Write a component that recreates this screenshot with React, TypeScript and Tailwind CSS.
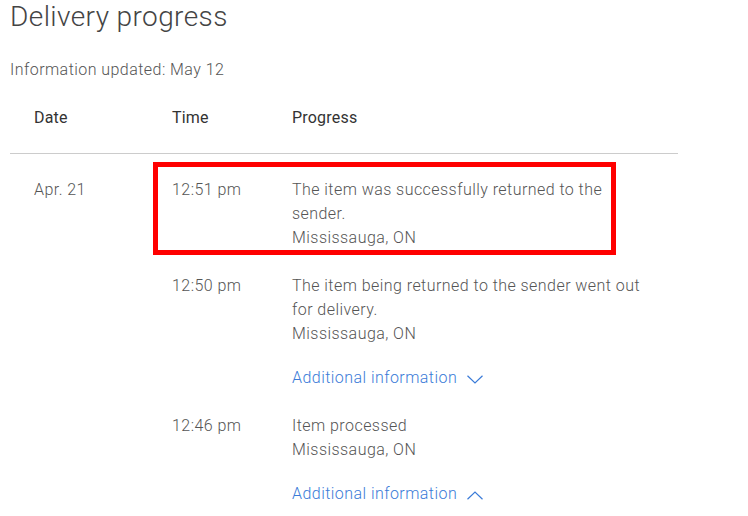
import React from 'react';

type Event = {
  time: string;
  text: string;
  place: string;
  more?: 'down' | 'up';
};

const events: Event[] = [
  { time: '12:51 pm', text: 'The item was successfully returned to the sender.', place: 'Mississauga, ON' },
  { time: '12:50 pm', text: 'The item being returned to the sender went out for delivery.', place: 'Mississauga, ON', more: 'down' },
  { time: '12:46 pm', text: 'Item processed', place: 'Mississauga, ON', more: 'up' },
];

function Chevron({ dir }: { dir: 'down' | 'up' }) {
  return (
    <svg width="16" height="9" viewBox="0 0 16 9" className="ml-[10px] mt-[2px]" fill="none">
      <path
        d={dir === 'down' ? 'M0.5 0.8 L8 8 L15.5 0.8' : 'M0.5 8.2 L8 1 L15.5 8.2'}
        stroke="#3a7bd8"
        strokeWidth="1.2"
      />
    </svg>
  );
}

export default function App() {
  return (
    <div className="relative min-h-[516px] w-[748px] overflow-hidden bg-white px-[10px] font-['Roboto',sans-serif] text-[16px] font-light tracking-[0.45px] text-[#555]">
      <h1 className="mt-[2px] text-[28px] font-light leading-[30px] tracking-[0.4px] text-[#444]">Delivery progress</h1>
      <p className="mt-[26px] leading-[24px]">Information updated: May 12</p>

      <div className="w-[668px]">
        {/* header */}
        <div className="mt-[24px] grid grid-cols-[138px_120px_1fr] border-b border-[#cccccc] pb-[23px] font-normal leading-[24px] tracking-[0.2px] text-[#333]">
          <div className="pl-6">Date</div>
          <div className="pl-6">Time</div>
          <div className="pl-6">Progress</div>
        </div>

        {/* rows */}
        {events.map((ev, i) => (
          <div key={ev.time} className="grid grid-cols-[138px_120px_1fr] pt-6 leading-[24px]">
            <div className="pl-6">{i === 0 ? 'Apr. 21' : ''}</div>
            <div className="pl-6">{ev.time}</div>
            <div className="pl-6 pr-6">
              <div>{ev.text}</div>
              <div>{ev.place}</div>
              {ev.more && (
                <div className="mt-5 flex items-center text-[#3a7bd8]">
                  <span>Additional information</span>
                  <Chevron dir={ev.more} />
                </div>
              )}
            </div>
          </div>
        ))}
      </div>

      {/* annotation box */}
      <div className="absolute left-[153px] top-[162px] h-[93px] w-[463px] border-[5px] border-[#ff0000]" />
    </div>
  );
}
